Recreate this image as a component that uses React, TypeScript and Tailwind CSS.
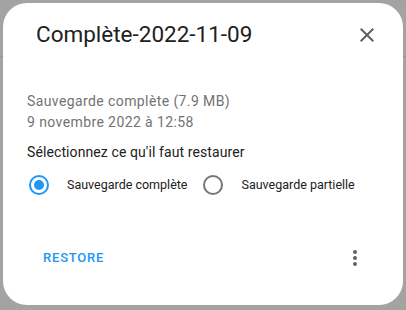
import { useState } from "react";

const options = [
  { id: "full", label: "Sauvegarde complète" },
  { id: "partial", label: "Sauvegarde partielle" },
];

function Radio({ checked }: { checked: boolean }) {
  return (
    <span
      className={
        checked
          ? "w-5 h-5 rounded-full border-2 border-[#2196f3] flex items-center justify-center flex-shrink-0"
          : "w-5 h-5 rounded-full border-2 border-[#757575] flex items-center justify-center flex-shrink-0"
      }
    >
      {checked && <span className="w-[10px] h-[10px] rounded-full bg-[#2196f3]" />}
    </span>
  );
}

export default function App() {
  const [selected, setSelected] = useState("full");

  return (
    <div
      className="relative w-[406px] h-[310px] bg-[#a3a3a3] overflow-hidden pt-[3px] pl-[3px]"
      style={{ fontFamily: "Roboto, 'Noto Sans', sans-serif" }}
    >
      {/* page behind the scrim */}
      <div className="absolute left-0 right-0 top-[56px] h-px bg-[#969696]" />

      <div className="relative w-[400px] h-[302px] rounded-[24px] bg-white flex flex-col">
        {/* Header */}
        <div className="h-[64px] flex items-center justify-between pl-[33px] pr-[12px]">
          <h2 className="text-[22.5px] text-[#212121] font-normal">Complète-2022-11-09</h2>
          <button className="w-12 h-12 flex items-center justify-center text-[#616161]">
            <svg viewBox="0 0 24 24" className="w-6 h-6" fill="currentColor">
              <path d="M19,6.41L17.59,5L12,10.59L6.41,5L5,6.41L10.59,12L5,17.59L6.41,19L12,13.41L17.59,19L19,17.59L13.41,12L19,6.41Z" />
            </svg>
          </button>
        </div>

        {/* Body */}
        <div className="px-6 pt-[24px]">
          <div className="text-[14px] leading-[21px] tracking-[0.4px] text-[#737373]">
            <div>Sauvegarde complète (7.9 MB)</div>
            <div>9 novembre 2022 à 12:58</div>
          </div>
          <div className="mt-[9px] text-[14px] leading-[20px] tracking-[0.1px] text-[#212121]">
            Sélectionnez ce qu'il faut restaurer
          </div>
          <div className="mt-[3px] h-[40px] flex items-center gap-4 pl-[2px]">
            {options.map((o) => (
              <label
                key={o.id}
                className="flex items-center gap-[18px] cursor-pointer"
                onClick={() => setSelected(o.id)}
              >
                <Radio checked={selected === o.id} />
                <span className="text-[12.5px] text-[#212121]">{o.label}</span>
              </label>
            ))}
          </div>
        </div>

        {/* Actions */}
        <div className="mt-auto mb-[23px] h-12 flex items-center justify-between pl-[40px] pr-[24px]">
          <button className="text-[13px] font-medium tracking-[0.8px] text-[#2196f3]">RESTORE</button>
          <button className="w-12 h-12 flex items-center justify-center text-[#616161]">
            <svg viewBox="0 0 24 24" className="w-6 h-6" fill="currentColor">
              <path d="M12,16A2,2 0 0,1 14,18A2,2 0 0,1 12,20A2,2 0 0,1 10,18A2,2 0 0,1 12,16M12,10A2,2 0 0,1 14,12A2,2 0 0,1 12,14A2,2 0 0,1 10,12A2,2 0 0,1 12,10M12,4A2,2 0 0,1 14,6A2,2 0 0,1 12,8A2,2 0 0,1 10,6A2,2 0 0,1 12,4Z" />
            </svg>
          </button>
        </div>
      </div>
    </div>
  );
}
